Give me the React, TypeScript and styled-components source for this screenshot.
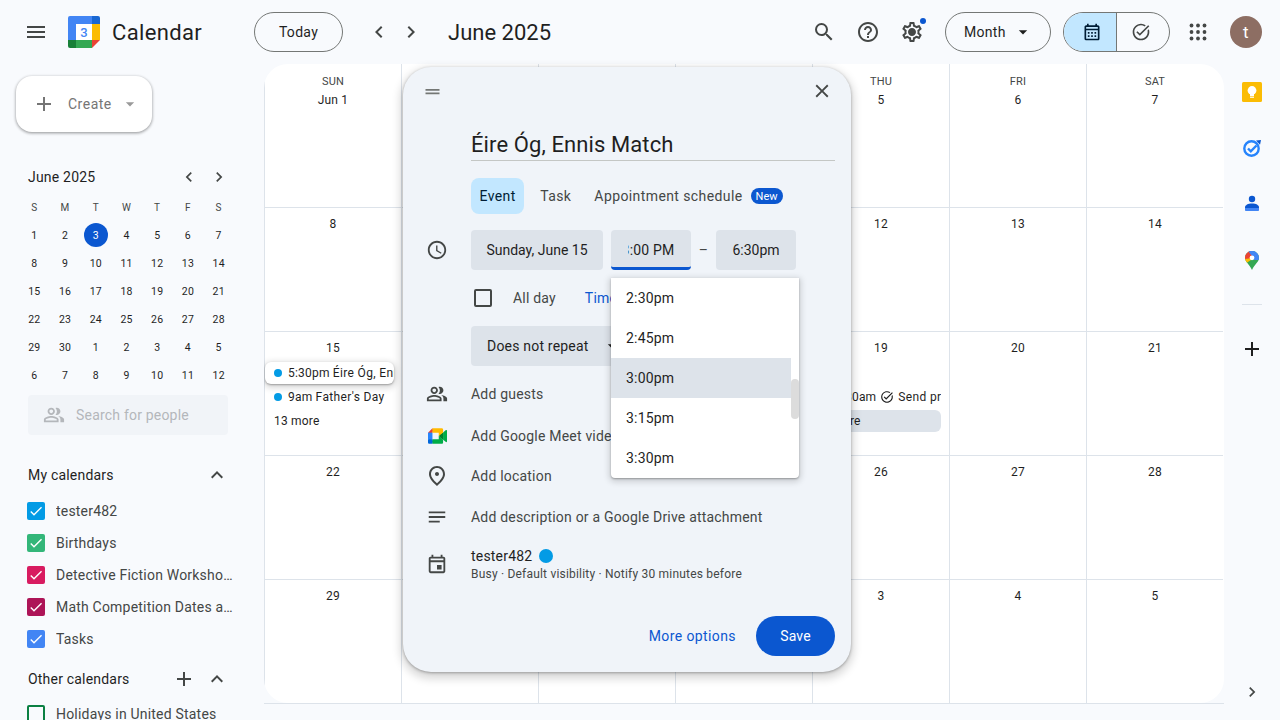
import styled, { createGlobalStyle } from "styled-components";
import {
  MdMenu,
  MdSearch,
  MdHelpOutline,
  MdOutlineSettings,
  MdArrowDropDown,
  MdChevronLeft,
  MdChevronRight,
  MdClose,
  MdOutlineAccessTime,
  MdOutlinePeopleAlt,
  MdOutlinePlace,
  MdNotes,
  MdOutlineEvent,
  MdAdd,
  MdExpandLess,
  MdCheck,
  MdOutlineTaskAlt,
  MdOutlineCalendarMonth,
  MdDragHandle,
} from "react-icons/md";

const FONT = `Roboto, "Liberation Sans", sans-serif`;
const LINE = "#dde3ea";
const INK = "#1f1f1f";
const MUTED = "#444746";
const BLUE = "#0b57d0";

const GlobalStyle = createGlobalStyle`
  html, body {
    margin: 0;
    padding: 0;
    height: 720px;
    overflow: hidden;
    background: #f8fafd;
    font-family: ${FONT};
    color: ${INK};
    letter-spacing: 0.2px;
  }
  * { box-sizing: border-box; }
`;

const Page = styled.div`
  width: 1280px;
  height: 720px;
  display: flex;
  flex-direction: column;
  overflow: hidden;
`;

/* header */
const Header = styled.header`
  height: 64px;
  flex: none;
  display: flex;
  align-items: center;
  padding-right: 18px;
`;
const Brand = styled.div`
  width: 254px;
  flex: none;
  display: flex;
  align-items: center;
  padding-left: 12px;
`;
const BrandName = styled.span`
  font-size: 22px;
  margin-left: 12px;
  letter-spacing: 0.35px;
`;
const IconButton = styled.button<{ $size?: number; $color?: string }>`
  position: relative;
  width: ${(p) => p.$size ?? 40}px;
  height: ${(p) => p.$size ?? 40}px;
  flex: none;
  padding: 0;
  border: 0;
  background: none;
  display: flex;
  align-items: center;
  justify-content: center;
  color: ${(p) => p.$color ?? MUTED};
`;
const MenuButton = styled(IconButton)`
  width: 48px;
  margin-right: 8px;
`;
const PillButton = styled.button<{ $width: number }>`
  width: ${(p) => p.$width}px;
  height: 40px;
  flex: none;
  border: 1px solid #747775;
  border-radius: 20px;
  background: none;
  font: 450 14px ${FONT};
  letter-spacing: 0.3px;
  color: ${INK};
  display: flex;
  align-items: center;
  justify-content: center;
  padding: 0;
`;
const MonthPill = styled(PillButton)`
  justify-content: flex-start;
  padding-left: 18px;
`;
const PeriodNav = styled.div`
  display: flex;
  align-items: center;
  margin-left: 24px;
  gap: 8px;
  color: ${MUTED};
`;
const PeriodTitle = styled.span`
  font-size: 22px;
  margin-left: 25px;
  letter-spacing: 0;
`;
const HeaderRight = styled.div`
  margin-left: auto;
  display: flex;
  align-items: center;
`;
const IconGroup = styled.div`
  display: flex;
  gap: 4px;
  margin-right: 13px;
`;
const NotifyDot = styled.span`
  position: absolute;
  top: 6px;
  right: 6px;
  width: 6px;
  height: 6px;
  border-radius: 50%;
  background: ${BLUE};
`;
const GearCore = styled.span`
  position: absolute;
  top: 17px;
  left: 17px;
  width: 6px;
  height: 6px;
  border-radius: 50%;
  background: ${MUTED};
`;
const ViewToggle = styled.div`
  width: 107px;
  height: 40px;
  margin-left: 12px;
  border: 1px solid #747775;
  border-radius: 20px;
  overflow: hidden;
  display: flex;
`;
const ViewOption = styled.div<{ $active?: boolean }>`
  flex: 1;
  display: flex;
  align-items: center;
  justify-content: center;
  background: ${(p) => (p.$active ? "#c2e7ff" : "none")};
  color: ${(p) => (p.$active ? "#001d35" : MUTED)};
  padding-left: ${(p) => (p.$active ? 4 : 0)}px;
  padding-right: ${(p) => (p.$active ? 0 : 4)}px;
  & + & {
    border-left: 1px solid #747775;
  }
`;
const AppsButton = styled(IconButton)`
  margin-left: 8px;
`;
const Avatar = styled.div`
  width: 32px;
  height: 32px;
  margin-left: 12px;
  border-radius: 50%;
  background: #8d6e63;
  color: #fff;
  font-size: 17px;
  display: flex;
  align-items: center;
  justify-content: center;
`;

/* body */
const Body = styled.div`
  flex: 1;
  display: flex;
  min-height: 0;
`;
const Sidebar = styled.aside`
  width: 264px;
  flex: none;
  padding: 12px 0 0 16px;
  overflow: hidden;
`;
const CreateButton = styled.button`
  width: 136px;
  height: 56px;
  border: 0;
  border-radius: 16px;
  background: #fff;
  box-shadow: 0 1px 3px rgba(0, 0, 0, 0.3), 0 1px 3px 1px rgba(0, 0, 0, 0.1);
  display: flex;
  align-items: center;
  padding: 0 0 0 16px;
  color: #757575;
  font: 450 14px ${FONT};
  letter-spacing: 0.5px;
`;
const CreateLabel = styled.span`
  margin: 0 8px 0 12px;
`;
const MiniHeader = styled.div`
  height: 24px;
  margin: 33px 35px 0 12px;
  display: flex;
  align-items: center;
  font-size: 14px;
  font-weight: 450;
  color: ${INK};
`;
const MiniNav = styled.div`
  margin-left: auto;
  display: flex;
  gap: 10px;
  color: ${MUTED};
`;
const MiniGrid = styled.div`
  width: 215px;
  margin: 4px 0 0 3px;
  display: grid;
  grid-template-columns: repeat(7, 1fr);
  grid-auto-rows: 28px;
`;
const MiniCell = styled.div<{ $head?: boolean; $muted?: boolean }>`
  display: flex;
  align-items: center;
  justify-content: center;
  font-size: ${(p) => (p.$head ? 10 : 10.5)}px;
  font-weight: ${(p) => (p.$head ? 450 : 400)};
  color: ${(p) => (p.$head || p.$muted ? MUTED : INK)};
`;
const TodayMark = styled.span`
  width: 24px;
  height: 24px;
  border-radius: 50%;
  background: ${BLUE};
  color: #fff;
  display: flex;
  align-items: center;
  justify-content: center;
`;
const PeopleSearch = styled.div`
  width: 200px;
  height: 40px;
  margin: 6px 0 0 12px;
  border-radius: 4px;
  background: #f1f4f8;
  display: flex;
  align-items: center;
  padding-left: 15px;
  gap: 11px;
  color: #b4b7bb;
  font-size: 14px;
`;
const SectionHead = styled.div<{ $top: number }>`
  height: 28px;
  margin: ${(p) => p.$top}px 35px 0 12px;
  display: flex;
  align-items: center;
  font-size: 14px;
  font-weight: 450;
  color: ${INK};
`;
const SectionTools = styled.div`
  margin-left: auto;
  display: flex;
  align-items: center;
  gap: 9px;
  color: ${MUTED};
`;
const CalendarList = styled.div<{ $top: number }>`
  margin-top: ${(p) => p.$top}px;
`;
const CalendarRow = styled.div`
  height: 32px;
  display: flex;
  align-items: center;
  padding-left: 11px;
  font-size: 14px;
`;
const CalendarCheck = styled.span<{ $color: string; $off?: boolean }>`
  width: 18px;
  height: 18px;
  flex: none;
  border-radius: 2px;
  background: ${(p) => (p.$off ? "none" : p.$color)};
  border: ${(p) => (p.$off ? `2px solid ${p.$color}` : "0")};
  color: #fff;
  display: flex;
  align-items: center;
  justify-content: center;
`;
const CalendarName = styled.span`
  width: 177px;
  margin-left: 11px;
  white-space: nowrap;
  overflow: hidden;
  text-overflow: ellipsis;
  color: ${MUTED};
`;

/* month grid */
const Month = styled.main`
  position: relative;
  width: 960px;
  height: 640px;
  flex: none;
  border-bottom: 1px solid ${LINE};
`;
const MonthGrid = styled.div`
  height: 100%;
  background: #fff;
  border-radius: 24px;
  display: grid;
  grid-template-columns: repeat(7, 137px) 1fr;
  grid-template-rows: 143px 124px 124px 124px 124px;
  overflow: hidden;
`;
const DayCell = styled.div<{ $row: number }>`
  border-left: 1px solid ${LINE};
  border-top: ${(p) => (p.$row > 0 ? `1px solid ${LINE}` : "0")};
  padding-top: ${(p) => (p.$row > 0 ? 9 : 12)}px;
  min-width: 0;
`;
const Weekday = styled.div`
  text-align: center;
  font-size: 11px;
  font-weight: 450;
  line-height: 12px;
  margin-bottom: 5px;
  color: ${MUTED};
`;
const DayNumber = styled.div`
  text-align: center;
  font-size: 12px;
  font-weight: 450;
  line-height: 14px;
  height: 14px;
`;
const EventStack = styled.div`
  margin-top: 7px;
  display: flex;
  flex-direction: column;
  gap: 2px;
`;
const EventChip = styled.div<{ $raised?: boolean; $filled?: boolean; $inset?: number }>`
  height: 22px;
  margin-right: ${(p) => (p.$raised ? 7 : 8)}px;
  padding-left: ${(p) => p.$inset ?? 9}px;
  display: flex;
  align-items: center;
  gap: 6px;
  font-size: 12px;
  font-weight: 450;
  white-space: nowrap;
  overflow: hidden;
  border-radius: 6px;
  background: ${(p) => (p.$raised ? "#fff" : p.$filled ? LINE : "none")};
  position: ${(p) => (p.$raised ? "relative" : "static")};
  box-shadow: ${(p) => (p.$raised ? "0 2px 6px 2px rgba(0,0,0,.15), 0 1px 2px rgba(0,0,0,.3)" : "none")};
`;
const TaskChip = styled(EventChip)`
  gap: 4px;
  svg {
    flex: none;
  }
`;
const EventDot = styled.span`
  width: 8px;
  height: 8px;
  flex: none;
  border-radius: 50%;
  background: #039be5;
`;
const EventTime = styled.span`
  font-weight: 400;
  color: ${INK};
`;
const EventTitle = styled.span`
  letter-spacing: 0.35px;
`;

/* quick create dialog */
const Dialog = styled.section`
  position: absolute;
  left: 139px;
  top: 3px;
  width: 448px;
  height: 605px;
  border-radius: 28px;
  background: #f0f4f9;
  box-shadow: 0 4px 8px 3px rgba(0, 0, 0, 0.15), 0 1px 3px rgba(0, 0, 0, 0.3);
  display: flex;
  flex-direction: column;
`;
const DialogTop = styled.div`
  height: 48px;
  flex: none;
  padding: 0 9px 0 19px;
  display: flex;
  align-items: center;
  justify-content: space-between;
  color: #747775;
`;
const CloseButton = styled(IconButton)`
  color: ${MUTED};
`;
const TitleField = styled.div`
  height: 46px;
  margin: 0 16px 0 68px;
  border-bottom: 1px solid #c4c7c5;
  font-size: 22px;
  line-height: 60px;
  letter-spacing: 0.1px;
  overflow: hidden;
`;
const Tabs = styled.div`
  height: 36px;
  margin: 17px 0 0 68px;
  display: flex;
  align-items: center;
`;
const Tab = styled.div<{ $active?: boolean }>`
  height: 36px;
  padding: 0 ${(p) => (p.$active ? 8.5 : 8)}px;
  margin-right: 8px;
  display: flex;
  align-items: center;
  border-radius: 8px;
  font-size: 14px;
  font-weight: 450;
  letter-spacing: 0.4px;
  background: ${(p) => (p.$active ? "#c2e7ff" : "none")};
  color: ${(p) => (p.$active ? "#001d35" : MUTED)};
  &:nth-child(2) {
    margin-right: 7px;
  }
`;
const NewBadge = styled.span`
  width: 32px;
  height: 16px;
  margin-left: -8px;
  border-radius: 8px;
  background: ${BLUE};
  color: #fff;
  font-size: 11px;
  font-weight: 450;
  letter-spacing: 0;
  display: flex;
  align-items: center;
  justify-content: center;
`;
const Row = styled.div<{ $top?: number; $height?: number }>`
  height: ${(p) => p.$height ?? 40}px;
  margin-top: ${(p) => p.$top ?? 0}px;
  flex: none;
  display: flex;
  align-items: center;
  font-size: 14px;
  color: ${MUTED};
`;
const RowIcon = styled.div`
  width: 68px;
  flex: none;
  display: flex;
  align-items: center;
  justify-content: center;
  color: ${MUTED};
`;
const Field = styled.div<{ $width: number; $focus?: boolean }>`
  width: ${(p) => p.$width}px;
  height: 40px;
  flex: none;
  border-radius: 4px;
  background: ${LINE};
  color: ${INK};
  letter-spacing: 0;
  display: flex;
  align-items: center;
  justify-content: center;
  border-bottom: ${(p) => (p.$focus ? `3px solid ${BLUE}` : "0")};
  padding-top: ${(p) => (p.$focus ? 3 : 0)}px;
`;
const TimeAnchor = styled.div`
  position: relative;
  margin-left: 8px;
`;
const ClippedTime = styled.div`
  width: 47px;
  overflow: hidden;
  display: flex;
  justify-content: flex-end;
  white-space: nowrap;
  letter-spacing: 0.2px;
`;
const Dash = styled.span`
  width: 25px;
  text-align: center;
`;
const AllDayBox = styled.span`
  width: 18px;
  height: 18px;
  margin-left: 3px;
  border: 2px solid ${MUTED};
  border-radius: 2px;
`;
const AllDayLabel = styled.span`
  margin-left: 21px;
  color: ${MUTED};
`;
const ZoneLink = styled.span`
  margin-left: 29px;
  color: ${BLUE};
  font-weight: 450;
`;
const RepeatField = styled.div`
  width: 175px;
  height: 40px;
  padding-left: 16px;
  border-radius: 4px;
  background: ${LINE};
  color: ${INK};
  display: flex;
  align-items: center;
  gap: 13px;
`;
const OwnerName = styled.div`
  height: 20px;
  display: flex;
  align-items: center;
  gap: 7px;
  color: ${INK};
`;
const OwnerDot = styled.span`
  width: 14px;
  height: 14px;
  border-radius: 50%;
  background: #039be5;
`;
const OwnerMeta = styled.div`
  font-size: 12px;
  line-height: 16px;
`;
const DialogFooter = styled.div`
  margin-top: auto;
  padding: 0 16px 16px 0;
  display: flex;
  align-items: center;
  justify-content: flex-end;
  gap: 20px;
`;
const TextButton = styled.button`
  border: 0;
  padding: 0;
  background: none;
  color: ${BLUE};
  font: 450 14px ${FONT};
  letter-spacing: 0.4px;
`;
const SaveButton = styled.button`
  width: 79px;
  height: 40px;
  border: 0;
  border-radius: 20px;
  background: ${BLUE};
  color: #fff;
  font: 450 14px ${FONT};
  letter-spacing: 0.2px;
`;
const TimeMenu = styled.div`
  position: absolute;
  left: 0;
  top: 48px;
  width: 188px;
  height: 200px;
  background: #fff;
  border-radius: 0 0 4px 4px;
  box-shadow: 0 2px 6px 2px rgba(0, 0, 0, 0.15), 0 1px 2px rgba(0, 0, 0, 0.3);
  z-index: 2;
`;
const TimeOption = styled.div<{ $selected?: boolean }>`
  width: 180px;
  height: 40px;
  padding-left: 15px;
  display: flex;
  align-items: center;
  color: ${INK};
  background: ${(p) => (p.$selected ? LINE : "none")};
`;
const ScrollThumb = styled.div`
  position: absolute;
  right: 0;
  top: 101px;
  width: 8px;
  height: 40px;
  border-radius: 4px;
  background: #dcdcdc;
`;

/* right rail */
const Rail = styled.aside`
  width: 56px;
  flex: none;
  display: flex;
  flex-direction: column;
  align-items: center;
`;
const RailSlot = styled.div`
  width: 40px;
  height: 56px;
  flex: none;
  display: flex;
  align-items: center;
  justify-content: center;
`;
const RailRule = styled.div`
  width: 20px;
  height: 1px;
  margin: 16px 0 24px;
  background: ${LINE};
`;
const RailBottom = styled(IconButton)`
  margin-top: auto;
  margin-bottom: 8px;
`;

function LogoMark() {
  return (
    <svg width="32" height="32" viewBox="0 0 32 32">
      <path d="M2 0h22v8H8v16H0V2a2 2 0 0 1 2-2z" fill="#4285f4" />
      <path d="M24 0h6a2 2 0 0 1 2 2v6h-8z" fill="#1967d2" />
      <rect x="24" y="8" width="8" height="16" fill="#fbbc04" />
      <rect x="8" y="24" width="16" height="8" fill="#34a853" />
      <path d="M0 24h8v8H2a2 2 0 0 1-2-2z" fill="#188038" />
      <path d="M24 24h8l-8 8z" fill="#ea4335" />
      <rect x="8" y="8" width="16" height="16" fill="#fff" />
      <text x="16" y="21" textAnchor="middle" fontSize="13" fontWeight="500" fill="#4285f4" fontFamily="Roboto">
        3
      </text>
    </svg>
  );
}

function AppsMark() {
  const spots = [3.5, 10, 16.5];
  return (
    <svg width="20" height="20" viewBox="0 0 20 20" fill="currentColor">
      {spots.map((y) => spots.map((x) => <circle key={`${x}-${y}`} cx={x} cy={y} r="1.9" />))}
    </svg>
  );
}

function MeetMark() {
  return (
    <svg width="19" height="16" viewBox="0 0 87.5 72">
      <path fill="#00832d" d="M49.5 36l8.53 9.75 11.47 7.33 2-17.02-2-16.64-11.69 6.44z" />
      <path fill="#0066da" d="M0 51.5V66c0 3.315 2.685 6 6 6h14.5l3-10.96-3-9.54-9.95-3z" />
      <path fill="#e94235" d="M20.5 0L0 20.5l10.55 3 9.95-3 2.95-9.41z" />
      <path fill="#2684fc" d="M20.5 20.5H0v31h20.5z" />
      <path fill="#00ac47" d="M82.6 8.68L69.5 19.42v33.66l13.16 10.79c1.97 1.54 4.85.135 4.85-2.37V11c0-2.535-2.945-3.925-4.91-2.32zM49.5 36v15.5h-29V72h43c3.315 0 6-2.685 6-6V53.08z" />
      <path fill="#ffba00" d="M63.5 0h-43v20.5h29V36l20-16.57V6c0-3.315-2.685-6-6-6z" />
    </svg>
  );
}

function KeepMark() {
  return (
    <svg width="20" height="20" viewBox="0 0 20 20">
      <rect width="20" height="20" rx="1.5" fill="#fbbc04" />
      <circle cx="10" cy="8.5" r="4.4" fill="#fff" />
      <rect x="8" y="12" width="4" height="2" fill="#fff" />
      <rect x="8" y="14.6" width="4" height="1.2" fill="#fff" />
    </svg>
  );
}

function TasksMark() {
  return (
    <svg width="20" height="20" viewBox="0 0 20 20">
      <circle cx="9.5" cy="10.5" r="7.2" fill="none" stroke="#2684fc" strokeWidth="2.4" />
      <path d="M6 10.5l2.8 2.8L14.5 7.5" fill="none" stroke="#2684fc" strokeWidth="2.4" />
      <path d="M14 2.5l5-.5-1 4.8z" fill="#0b57d0" />
    </svg>
  );
}

function ContactsMark() {
  return (
    <svg width="16" height="18" viewBox="0 0 16 18">
      <circle cx="8" cy="4" r="3.2" fill="#0b57d0" />
      <path d="M1 15v-2.5C1 10 4 8.5 8 8.500s7 1.500 7 4V15z" fill="#0b57d0" />
      <path d="M1 13h14v2.200c0 .5-.4.8-.8.8H1.800c-.4 0-.8-.3-.8-.8z" fill="#4285f4" />
    </svg>
  );
}

function MapsMark() {
  return (
    <svg width="14" height="19" viewBox="0 0 14 19">
      <defs>
        <clipPath id="pin">
          <path d="M7 0C3 0 0 3 0 6.800 0 11 4.500 13.500 7 19c2.500-5.500 7-8 7-12.200C14 3 11 0 7 0z" />
        </clipPath>
      </defs>
      <g clipPath="url(#pin)">
        <rect width="14" height="19" fill="#34a853" />
        <path d="M0 5h7l2 2-9 6z" fill="#fbbc04" />
        <path d="M0 0h5l4 7H7L0 8z" fill="#ea4335" />
        <path d="M3 0h11v9H9L7 5z" fill="#4285f4" />
      </g>
      <circle cx="7" cy="6.800" r="2.400" fill="#fff" />
    </svg>
  );
}

const MINI_DAYS = [
  "1", "2", "3", "4", "5", "6", "7",
  "8", "9", "10", "11", "12", "13", "14",
  "15", "16", "17", "18", "19", "20", "21",
  "22", "23", "24", "25", "26", "27", "28",
  "29", "30", "1", "2", "3", "4", "5",
  "6", "7", "8", "9", "10", "11", "12",
];
const WEEKDAYS = ["SUN", "MON", "TUE", "WED", "THU", "FRI", "SAT"];
const MONTH_DAYS = [
  "Jun 1", "2", "3", "4", "5", "6", "7",
  "8", "9", "10", "11", "12", "13", "14",
  "15", "16", "17", "18", "19", "20", "21",
  "22", "23", "24", "25", "26", "27", "28",
  "29", "30", "Jul 1", "2", "3", "4", "5",
];
const MY_CALENDARS = [
  { name: "tester482", color: "#039be5" },
  { name: "Birthdays", color: "#33b679" },
  { name: "Detective Fiction Workshop Meetings", color: "#d81b60" },
  { name: "Math Competition Dates and Deadlines", color: "#ad1457" },
  { name: "Tasks", color: "#4285f4" },
];
const TIMES = ["2:30pm", "2:45pm", "3:00pm", "3:15pm", "3:30pm"];

function cellEvents(index: number) {
  if (index === 14) {
    return (
      <EventStack>
        <EventChip $raised>
          <EventDot />
          <span>
            <EventTime>5:30pm</EventTime> <EventTitle>Éire Óg, Ennis Match</EventTitle>
          </span>
        </EventChip>
        <EventChip>
          <EventDot />
          <span>
            <EventTime>9am</EventTime> <EventTitle>Father's Day</EventTitle>
          </span>
        </EventChip>
        <EventChip>13 more</EventChip>
      </EventStack>
    );
  }
  if (index === 18) {
    return (
      <EventStack>
        <EventChip />
        <TaskChip $inset={15}>
          <EventTime>10:30am</EventTime>
          <MdOutlineTaskAlt size={14} />
          <EventTitle>Send proposal</EventTitle>
        </TaskChip>
        <EventChip $filled>2 more</EventChip>
      </EventStack>
    );
  }
  return null;
}

export default function App() {
  return (
    <Page>
      <GlobalStyle />
      <Header>
        <Brand>
          <MenuButton>
            <MdMenu size={24} />
          </MenuButton>
          <LogoMark />
          <BrandName>Calendar</BrandName>
        </Brand>
        <PillButton $width={89}>Today</PillButton>
        <PeriodNav>
          <MdChevronLeft size={24} />
          <MdChevronRight size={24} />
        </PeriodNav>
        <PeriodTitle>June 2025</PeriodTitle>
        <HeaderRight>
          <IconGroup>
            <IconButton>
              <MdSearch size={24} />
            </IconButton>
            <IconButton>
              <MdHelpOutline size={24} />
            </IconButton>
            <IconButton>
              <MdOutlineSettings size={24} />
              <GearCore />
              <NotifyDot />
            </IconButton>
          </IconGroup>
          <MonthPill $width={106}>
            Month
            <MdArrowDropDown size={20} style={{ marginLeft: 7 }} />
          </MonthPill>
          <ViewToggle>
            <ViewOption $active>
              <MdOutlineCalendarMonth size={20} />
            </ViewOption>
            <ViewOption>
              <MdOutlineTaskAlt size={20} />
            </ViewOption>
          </ViewToggle>
          <AppsButton>
            <AppsMark />
          </AppsButton>
          <Avatar>t</Avatar>
        </HeaderRight>
      </Header>
      <Body>
        <Sidebar>
          <CreateButton>
            <MdAdd size={24} color="#757575" />
            <CreateLabel>Create</CreateLabel>
            <MdArrowDropDown size={20} color="#9a9a9a" />
          </CreateButton>
          <MiniHeader>
            June 2025
            <MiniNav>
              <MdChevronLeft size={20} />
              <MdChevronRight size={20} />
            </MiniNav>
          </MiniHeader>
          <MiniGrid>
            {["S", "M", "T", "W", "T", "F", "S"].map((d, i) => (
              <MiniCell $head key={i}>
                {d}
              </MiniCell>
            ))}
            {MINI_DAYS.map((d, i) => (
              <MiniCell key={i}>{i === 2 ? <TodayMark>{d}</TodayMark> : d}</MiniCell>
            ))}
          </MiniGrid>
          <PeopleSearch>
            <MdOutlinePeopleAlt size={22} />
            Search for people
          </PeopleSearch>
          <SectionHead $top={26}>
            My calendars
            <SectionTools>
              <MdExpandLess size={24} />
            </SectionTools>
          </SectionHead>
          <CalendarList $top={6}>
            {MY_CALENDARS.map((c) => (
              <CalendarRow key={c.name}>
                <CalendarCheck $color={c.color}>
                  <MdCheck size={16} />
                </CalendarCheck>
                <CalendarName>{c.name}</CalendarName>
              </CalendarRow>
            ))}
          </CalendarList>
          <SectionHead $top={10}>
            Other calendars
            <SectionTools>
              <MdAdd size={24} />
              <MdExpandLess size={24} />
            </SectionTools>
          </SectionHead>
          <CalendarList $top={5}>
            <CalendarRow>
              <CalendarCheck $color="#0b8043" $off />
              <CalendarName>Holidays in United States</CalendarName>
            </CalendarRow>
          </CalendarList>
        </Sidebar>
        <Month>
          <MonthGrid>
            {MONTH_DAYS.map((d, i) => (
              <DayCell $row={Math.floor(i / 7)} key={i} style={{ gridColumn: (i % 7) + 1 }}>
                {i < 7 && <Weekday>{WEEKDAYS[i]}</Weekday>}
                <DayNumber>{d}</DayNumber>
                {cellEvents(i)}
              </DayCell>
            ))}
          </MonthGrid>
          <Dialog>
            <DialogTop>
              <MdDragHandle size={21} />
              <CloseButton>
                <MdClose size={22} />
              </CloseButton>
            </DialogTop>
            <TitleField>Éire Óg, Ennis Match</TitleField>
            <Tabs>
              <Tab $active>Event</Tab>
              <Tab>Task</Tab>
              <Tab>Appointment schedule</Tab>
              <NewBadge>New</NewBadge>
            </Tabs>
            <Row $top={16}>
              <RowIcon>
                <MdOutlineAccessTime size={22} />
              </RowIcon>
              <Field $width={132}>Sunday, June 15</Field>
              <TimeAnchor>
                <Field $width={80} $focus>
                  <ClippedTime>3:00 PM</ClippedTime>
                </Field>
                <TimeMenu>
                  {TIMES.map((t) => (
                    <TimeOption $selected={t === "3:00pm"} key={t}>
                      {t}
                    </TimeOption>
                  ))}
                  <ScrollThumb />
                </TimeMenu>
              </TimeAnchor>
              <Dash>–</Dash>
              <Field $width={80}>6:30pm</Field>
            </Row>
            <Row $top={8}>
              <RowIcon />
              <AllDayBox />
              <AllDayLabel>All day</AllDayLabel>
              <ZoneLink>Time zone</ZoneLink>
            </Row>
            <Row $top={8}>
              <RowIcon />
              <RepeatField>
                Does not repeat
                <MdArrowDropDown size={20} />
              </RepeatField>
            </Row>
            <Row $top={8}>
              <RowIcon>
                <MdOutlinePeopleAlt size={22} />
              </RowIcon>
              Add guests
            </Row>
            <Row $top={2}>
              <RowIcon>
                <MeetMark />
              </RowIcon>
              Add Google Meet video conferencing
            </Row>
            <Row>
              <RowIcon>
                <MdOutlinePlace size={24} />
              </RowIcon>
              Add location
            </Row>
            <Row $top={1}>
              <RowIcon>
                <MdNotes size={22} />
              </RowIcon>
              Add description or a Google Drive attachment
            </Row>
            <Row $top={9} $height={36}>
              <RowIcon>
                <MdOutlineEvent size={22} />
              </RowIcon>
              <div>
                <OwnerName>
                  tester482
                  <OwnerDot />
                </OwnerName>
                <OwnerMeta>Busy · Default visibility · Notify 30 minutes before</OwnerMeta>
              </div>
            </Row>
            <DialogFooter>
              <TextButton>More options</TextButton>
              <SaveButton>Save</SaveButton>
            </DialogFooter>
          </Dialog>
        </Month>
        <Rail>
          <RailSlot>
            <KeepMark />
          </RailSlot>
          <RailSlot>
            <TasksMark />
          </RailSlot>
          <RailSlot>
            <ContactsMark />
          </RailSlot>
          <RailSlot>
            <MapsMark />
          </RailSlot>
          <RailRule />
          <IconButton $color="#1f1f1f">
            <MdAdd size={24} />
          </IconButton>
          <RailBottom>
            <MdChevronRight size={20} />
          </RailBottom>
        </Rail>
      </Body>
    </Page>
  );
}
